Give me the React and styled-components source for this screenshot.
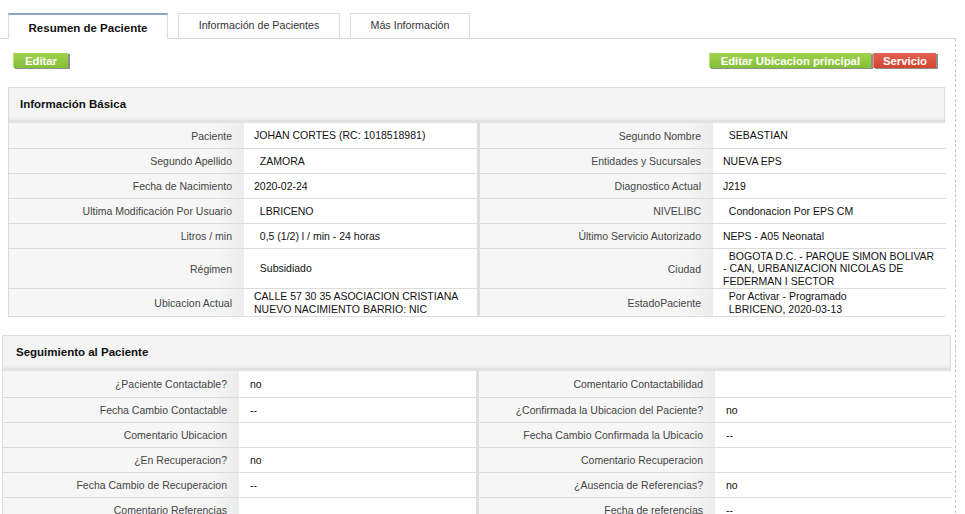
import React from 'react';
import styled, { createGlobalStyle } from 'styled-components';

const GlobalStyle = createGlobalStyle`
  body {
    margin: 0;
    background: #ffffff;
    font-family: "Liberation Sans", Arial, sans-serif;
    font-size: 10.5px;
    color: #222;
  }
`;

const NB = '\u00a0\u00a0';

const basicRows = [
  { h: 26, l1: 'Paciente', v1: 'JOHAN CORTES (RC: 1018518981)', l2: 'Segundo Nombre', v2: NB + 'SEBASTIAN' },
  { h: 25, l1: 'Segundo Apellido', v1: NB + 'ZAMORA', l2: 'Entidades y Sucursales', v2: 'NUEVA EPS' },
  { h: 25, l1: 'Fecha de Nacimiento', v1: '2020-02-24', l2: 'Diagnostico Actual', v2: 'J219' },
  { h: 25, l1: 'Ultima Modificación Por Usuario', v1: NB + 'LBRICENO', l2: 'NIVELIBC', v2: NB + 'Condonacion Por EPS CM' },
  { h: 25, l1: 'Litros / min', v1: NB + '0,5 (1/2) l / min - 24 horas', l2: 'Último Servicio Autorizado', v2: 'NEPS - A05 Neonatal' },
  { h: 40, l1: 'Régimen', v1: NB + 'Subsidiado', l2: 'Ciudad', v2: NB + 'BOGOTA D.C. - PARQUE SIMON BOLIVAR - CAN, URBANIZACION NICOLAS DE FEDERMAN I SECTOR' },
  {
    h: 28,
    l1: 'Ubicacion Actual',
    v1: 'CALLE 57 30 35 ASOCIACION CRISTIANA NUEVO NACIMIENTO BARRIO: NIC',
    l2: 'EstadoPaciente',
    v2: [NB + 'Por Activar - Programado', NB + 'LBRICENO, 2020-03-13'],
  },
];

const followRows = [
  { h: 27, l1: '¿Paciente Contactable?', v1: 'no', l2: 'Comentario Contactabilidad', v2: '' },
  { h: 25, l1: 'Fecha Cambio Contactable', v1: '--', l2: '¿Confirmada la Ubicacion del Paciente?', v2: 'no' },
  { h: 25, l1: 'Comentario Ubicacion', v1: '', l2: 'Fecha Cambio Confirmada la Ubicacio', v2: '--' },
  { h: 25, l1: '¿En Recuperacion?', v1: 'no', l2: 'Comentario Recuperacion', v2: '' },
  { h: 25, l1: 'Fecha Cambio de Recuperacion', v1: '--', l2: '¿Ausencia de Referencias?', v2: 'no' },
  { h: 25, l1: 'Comentario Referencias', v1: '', l2: 'Fecha de referencias', v2: '--' },
];

const renderValue = (v) =>
  Array.isArray(v) ? v.map((line, i) => <div key={i}>{line}</div>) : v;

const InfoPanel = ({ title, rows, offset, width, cols, pad, titleIndent }) => (
  <Panel offset={offset} width={width}>
    <PanelHeader indent={titleIndent}>{title}</PanelHeader>
    <Grid>
      <colgroup>
        {cols.map((w, i) => (
          <col key={i} style={{ width: w }} />
        ))}
      </colgroup>
      <tbody>
        {rows.map((r) => (
          <tr key={r.l1}>
            <Label h={r.h}>{r.l1}</Label>
            <Value h={r.h} pad={pad}>{renderValue(r.v1)}</Value>
            <Label h={r.h} divider>{r.l2}</Label>
            <Value h={r.h} pad={pad}>{renderValue(r.v2)}</Value>
          </tr>
        ))}
      </tbody>
    </Grid>
  </Panel>
);

export default function App() {
  return (
    <>
      <GlobalStyle />
      <Page>
        <TabBar>
          <Tab active w={160}>Resumen de Paciente</Tab>
          <Tab w={162}>Información de Pacientes</Tab>
          <Tab w={120}>Más Información</Tab>
        </TabBar>
        <Content>
          <Actions>
            <Button>Editar</Button>
            <ButtonGroup>
              <Button>Editar Ubicacion principal</Button>
              <Button danger>Servicio</Button>
            </ButtonGroup>
          </Actions>
          <InfoPanel
            title="Información Básica"
            rows={basicRows}
            offset={8}
            width={937}
            cols={[235, 233, 236, 233]}
            pad={10}
            titleIndent={11}
          />
          <InfoPanel
            title="Seguimiento al Paciente"
            rows={followRows}
            offset={2}
            width={949}
            cols={[236, 237, 239, 237]}
            pad={11}
            titleIndent={13}
          />
        </Content>
      </Page>
    </>
  );
}

const Page = styled.div`
  width: 956px;
  padding-top: 13px;
`;

const TabBar = styled.div`
  display: flex;
  gap: 10px;
  padding-left: 8px;
  height: 25px;
  border-bottom: 1px solid #d6d6d6;
`;

const Tab = styled.div`
  width: ${({ w }) => w}px;
  box-sizing: border-box;
  height: ${({ active }) => (active ? 26 : 25)}px;
  background: #ffffff;
  border: 1px solid #dcdcdc;
  border-bottom: none;
  border-top: ${({ active }) => (active ? '2px solid #8ea9c6' : '1px solid #dcdcdc')};
  display: flex;
  align-items: center;
  justify-content: center;
  font-size: ${({ active }) => (active ? '11.5px' : '10.7px')};
  font-weight: ${({ active }) => (active ? 'bold' : 'normal')};
  color: ${({ active }) => (active ? '#111' : '#333')};
  padding-bottom: ${({ active }) => (active ? '0' : '2px')};
  padding-top: ${({ active }) => (active ? '1px' : '0')};
`;

const Content = styled.div`
  display: flex;
  flex-direction: column;
  gap: 18px;
  border-right: 1px dashed #c4c4c4;
  padding-top: 14px;
  min-height: 470px;
`;

const Actions = styled.div`
  display: flex;
  justify-content: space-between;
  align-items: center;
  padding: 0 19px 1px 13px;
  height: 15px;
`;

const ButtonGroup = styled.div`
  display: flex;
  gap: 2px;
`;

const Button = styled.div`
  height: 15px;
  box-sizing: border-box;
  padding: 0 ${({ danger }) => (danger ? '9px' : '11px')};
  display: flex;
  align-items: center;
  font-size: 11.3px;
  font-weight: bold;
  color: #ffffff;
  background: ${({ danger }) =>
    danger
      ? 'linear-gradient(#e2624f, #d2452f)'
      : 'linear-gradient(#a0d34c, #84bf35)'};
  border-left: 1px solid ${({ danger }) => (danger ? '#ee8a78' : '#b6df78')};
  box-shadow: 2px 1px 0 #8e8e8e;
`;

const Panel = styled.div`
  margin-left: ${({ offset }) => offset}px;
  width: ${({ width }) => width}px;
  box-sizing: border-box;
  border: 1px solid #dcdcdc;
`;

const PanelHeader = styled.div`
  height: 32px;
  background: #f4f4f4;
  border-bottom: 3px solid #e2e2e2;
  box-shadow: inset 0 -2px 2px #ebebeb;
  display: flex;
  align-items: center;
  padding-left: ${({ indent }) => indent}px;
  font-size: 11.5px;
  font-weight: bold;
  color: #111;
`;

const Grid = styled.table`
  width: 100%;
  border-collapse: separate;
  border-spacing: 0;
  table-layout: fixed;
  tr:not(:last-child) td {
    border-bottom: 1px solid #dcdcdc;
  }
`;

const Label = styled.td`
  height: ${({ h }) => h - 1}px;
  box-sizing: border-box;
  text-align: right;
  vertical-align: middle;
  padding: 0 12px 0 0;
  color: #444;
  line-height: 12px;
  background: linear-gradient(to right, #f6f6f6 88%, #ececec);
  border-left: ${({ divider }) => (divider ? '3px solid #dedede' : 'none')};
  white-space: nowrap;
  overflow: hidden;
`;

const Value = styled.td`
  height: ${({ h }) => h - 1}px;
  vertical-align: middle;
  padding: 0 10px 0 ${({ pad }) => pad}px;
  color: #111;
  line-height: 12.5px;
  background: #ffffff;
`;
